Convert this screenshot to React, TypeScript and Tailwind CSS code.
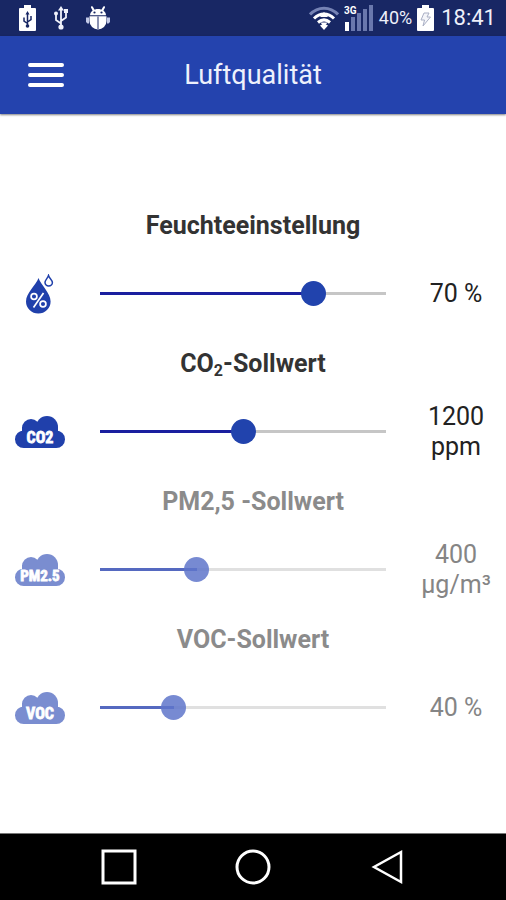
import { useState } from 'react';
import type { CSSProperties, ReactNode } from 'react';

function BatteryShape({ children }: { children: ReactNode }) {
    return (
        <svg viewBox="0 0 17 26" className="w-[17px] h-[26px]" aria-hidden="true">
            <path d="M5 0h7v3h4a1 1 0 0 1 1 1v21a1 1 0 0 1-1 1H1a1 1 0 0 1-1-1V4a1 1 0 0 1 1-1h4z" fill="#fff" />
            {children}
        </svg>
    );
}

function UsbIcon() {
    return (
        <svg viewBox="0 0 16 24" className="w-4 h-6" fill="none" stroke="#f0f2fb" strokeWidth="1.8" aria-hidden="true">
            <path d="M8 3v17M8 17.5l-5-3.4V9M8 15l5-3.4V6" />
            <path d="M8 0 5 4.5h6z" fill="#f0f2fb" stroke="none" />
            <circle cx="8" cy="21" r="2.6" fill="#f0f2fb" stroke="none" />
            <circle cx="3" cy="7.5" r="2" fill="#f0f2fb" stroke="none" />
            <path d="M11 3h4v4h-4z" fill="#f0f2fb" stroke="none" />
        </svg>
    );
}

function DebugIcon() {
    return (
        <svg viewBox="0 0 24 24" className="w-6 h-6" aria-hidden="true">
            <path d="M7.5 4 6 1.2M16.5 4 18 1.2" stroke="#fff" strokeWidth="2" strokeLinecap="round" />
            <path d="M4 9.2C4.500 1 19.500 1 20 9.200z" fill="#fff" />
            <path d="M3.500 10.200h17V15a8.500 8.500 0 0 1-17 0z" fill="#fff" />
            <path d="M0 11.500h3v6H1.500L0 16zM24 11.500h-3v6h1.500L24 16z" fill="#c3cae8" />
            <path d="M12 10.500V23" stroke="#182764" strokeWidth="1" />
            <circle cx="8.500" cy="6.500" r="1.100" fill="#182764" />
            <circle cx="15.500" cy="6.500" r="1.100" fill="#182764" />
        </svg>
    );
}

function WifiIcon() {
    return (
        <svg viewBox="0 0 30 24" className="w-[30px] h-6" fill="none" aria-hidden="true">
            <path d="M1 8.500C9 0 21 0 29 8.500" stroke="#7683b4" strokeWidth="3" />
            <path d="M5 12.500c6-6 14-6 20 0" stroke="#fff" strokeWidth="3" />
            <path d="M9 16.500c4-3.500 8-3.500 12 0" stroke="#fff" strokeWidth="3" />
            <path d="M15 24l-4-4.500q4-2.500 8 0z" fill="#fff" />
            <path d="M15 6l-4 5h8zM15 21l-3.500-4.500h7z" fill="#fff" />
        </svg>
    );
}

function SignalIcon() {
    return (
        <svg viewBox="0 0 30 28" className="w-[30px] h-7" aria-hidden="true">
            <path d="M7 13h4v14H7zM13 9h4v18h-4zM19 5h4v22h-4zM25 1h4v26h-4z" fill="#6a78ad" />
            <path d="M1 18h4v9H1z" fill="#fff" />
            <text x="0" y="10" fontSize="10" fontWeight="700" fill="#fff" stroke="#182764" strokeWidth="2" paintOrder="stroke">3G</text>
        </svg>
    );
}

function StatusBar() {
    return (
        <div className="h-9 shrink-0 bg-[#182764] text-[#eef0fa] flex items-center justify-between pl-[19px] pr-2.5">
            <div className="flex items-center gap-[17px]">
                <BatteryShape>
                    <path d="M8.500 8v14M8.500 18.500l-3.500-2.500v-3.500M8.500 17l3.500-2.500V11" stroke="#182764" strokeWidth="1.500" fill="none" />
                    <circle cx="8.500" cy="21" r="1.800" fill="#182764" />
                    <path d="M8.500 6 6.500 9.500h4z" fill="#182764" />
                </BatteryShape>
                <UsbIcon />
                <DebugIcon />
            </div>
            <div className="flex items-center gap-[5px]">
                <WifiIcon />
                <SignalIcon />
                <span className="text-lg leading-6">40%</span>
                <BatteryShape>
                    <path d="M7 8h5l-2 4h3.500L6 21l1.500-6H4z" fill="#f4f5f9" stroke="#a9afc4" strokeWidth="1" />
                </BatteryShape>
                <span className="text-[22px] leading-7 pl-0.5">18:41</span>
            </div>
        </div>
    );
}

function Header() {
    return (
        <header className="h-[78px] shrink-0 bg-[#2443ae] shadow-[0_1px_2px_rgba(0,0,0,0.5)] grid grid-cols-[92px_1fr_92px] items-center">
            <button type="button" aria-label="Menü" className="justify-self-center">
                <svg viewBox="0 0 36 26" className="w-9 h-[26px]" stroke="#fff" strokeWidth="4" strokeLinecap="round" aria-hidden="true">
                    <path d="M2 3h32M2 13h32M2 23h32" />
                </svg>
            </button>
            <h1 className="text-center text-[27px] leading-8 text-[#eef1fc]">Luftqualität</h1>
        </header>
    );
}

function HumidityIcon() {
    return (
        <svg viewBox="0 0 28 40" className="w-7 h-10" aria-hidden="true">
            <path d="M12.500 4C10 11 0 19 0 27.500a12.300 12 0 0 0 24.600 0C24.600 19 15 11 12.500 4z" fill="#2040ab" />
            <path d="M22.500 1.500c-1 3-3.500 4.500-3.500 7a3.700 3.500 0 0 0 7.400 0c0-2.500-2.900-4-3.900-7z" fill="#fff" stroke="#2040ab" strokeWidth="1.500" />
            <g fill="none" stroke="#fff" strokeWidth="1.700">
                <path d="M17.500 19 7.500 33.500" />
                <circle cx="8" cy="22.500" r="2.900" />
                <circle cx="17" cy="30" r="2.900" />
            </g>
        </svg>
    );
}

function CloudIcon({ label, size, muted }: { label: string; size: number; muted?: boolean }) {
    return (
        <svg viewBox="0 0 50 32" className="w-[50px] h-8" aria-hidden="true">
            <g fill={muted ? '#7a8dd0' : '#2040ab'}>
                <circle cx="16" cy="12" r="9" />
                <circle cx="32" cy="11" r="11" />
                <path d="M7 11h36v12H7z" />
                <rect x="0" y="14.500" width="50" height="17.500" rx="8.700" />
            </g>
            <text
                x="25"
                y="27"
                textAnchor="middle"
                fontSize={size}
                fontWeight="700"
                fill="#fff"
                stroke="#fff"
                strokeWidth="0.800"
                className="font-['Liberation_Sans_Narrow','Roboto_Condensed',sans-serif]"
            >
                {label}
            </text>
        </svg>
    );
}

type Setting = {
    id: string;
    title: ReactNode;
    icon: ReactNode;
    unit: string;
    min: number;
    max: number;
    step: number;
    initial: number;
    disabled?: boolean;
};

const settings: Setting[] = [
    {
        id: 'humidity',
        title: 'Feuchteeinstellung',
        icon: <HumidityIcon />,
        unit: '%',
        min: 20,
        max: 85,
        step: 5,
        initial: 70,
    },
    {
        id: 'co2',
        title: (
            <>
                CO<sub className="text-base leading-none">2</sub>-Sollwert
            </>
        ),
        icon: <CloudIcon label="CO2" size={16} />,
        unit: 'ppm',
        min: 400,
        max: 2000,
        step: 50,
        initial: 1200,
    },
    {
        id: 'pm25',
        title: 'PM2,5 -Sollwert',
        icon: <CloudIcon label="PM2.5" size={15} muted />,
        unit: 'µg/m³',
        min: 100,
        max: 1030,
        step: 10,
        initial: 400,
        disabled: true,
    },
    {
        id: 'voc',
        title: 'VOC-Sollwert',
        icon: <CloudIcon label="VOC" size={16} muted />,
        unit: '%',
        min: 20,
        max: 105,
        step: 5,
        initial: 40,
        disabled: true,
    },
];

const sliderBase =
    'block w-full h-[25px] appearance-none bg-transparent [&::-webkit-slider-runnable-track]:h-[3px] [&::-webkit-slider-thumb]:appearance-none [&::-webkit-slider-thumb]:w-[25px] [&::-webkit-slider-thumb]:h-[25px] [&::-webkit-slider-thumb]:-mt-[11px] [&::-webkit-slider-thumb]:rounded-full';
const sliderActive =
    '[&::-webkit-slider-runnable-track]:bg-[linear-gradient(to_right,#1a1f9f_var(--fill),#c6c6c6_var(--fill))] [&::-webkit-slider-thumb]:bg-[#2143ad]';
const sliderMuted =
    '[&::-webkit-slider-runnable-track]:bg-[linear-gradient(to_right,#5569c0_var(--fill),#e0e0e0_var(--fill))] [&::-webkit-slider-thumb]:bg-[#5f76ca]/85';

function SettingRow({ setting }: { setting: Setting }) {
    const { id, title, icon, unit, min, max, step, initial, disabled } = setting;
    const [value, setValue] = useState(initial);
    const ratio = (value - min) / (max - min);
    // the thumb is 25px wide, so its centre travels 25px less than the track
    const fill = { '--fill': `calc(${ratio} * (100% - 25px) + 12.5px)` } as CSSProperties;

    return (
        <section>
            <h2 className={`h-7 text-center text-[25px] leading-7 font-bold ${disabled ? 'text-[#8b8b8b]' : 'text-[#333333]'}`}>
                <label htmlFor={id}>{title}</label>
            </h2>
            <div className="mt-6 min-h-[60px] grid grid-cols-[80px_1fr_100px] gap-x-5 items-center">
                <div className="flex justify-center">{icon}</div>
                <input
                    id={id}
                    type="range"
                    min={min}
                    max={max}
                    step={step}
                    value={value}
                    disabled={disabled}
                    onChange={(e) => setValue(Number(e.target.value))}
                    style={fill}
                    className={`${sliderBase} ${disabled ? sliderMuted : sliderActive}`}
                />
                <output
                    htmlFor={id}
                    className={`text-center text-[25px] leading-[30px] px-3 ${disabled ? 'text-[#858585]' : 'text-[#222222]'}`}
                >
                    {value} {unit}
                </output>
            </div>
        </section>
    );
}

function NavBar() {
    return (
        <nav className="h-[67px] shrink-0 bg-black border-t border-[#777777] grid grid-cols-3 items-center px-[52px]">
            <button type="button" aria-label="Übersicht" className="justify-self-center">
                <svg viewBox="0 0 36 36" className="w-9 h-9" fill="none" stroke="#fff" strokeWidth="3">
                    <path d="M2 2h32v32H2z" />
                </svg>
            </button>
            <button type="button" aria-label="Startseite" className="justify-self-center">
                <svg viewBox="0 0 36 36" className="w-9 h-9" fill="none" stroke="#fff" strokeWidth="3">
                    <circle cx="18" cy="18" r="16" />
                </svg>
            </button>
            <button type="button" aria-label="Zurück" className="justify-self-center">
                <svg viewBox="0 0 36 36" className="w-9 h-9" fill="none" stroke="#fff" strokeWidth="2.500">
                    <path d="M32 3v30L5 18z" />
                </svg>
            </button>
        </nav>
    );
}

export default function App() {
    return (
        <div className="min-h-screen flex flex-col bg-white font-['Roboto',sans-serif]">
            <StatusBar />
            <Header />
            <main className="grow flex flex-col justify-center gap-[26px] pt-0.5">
                {settings.map((setting) => (
                    <SettingRow key={setting.id} setting={setting} />
                ))}
            </main>
            <NavBar />
        </div>
    );
}
